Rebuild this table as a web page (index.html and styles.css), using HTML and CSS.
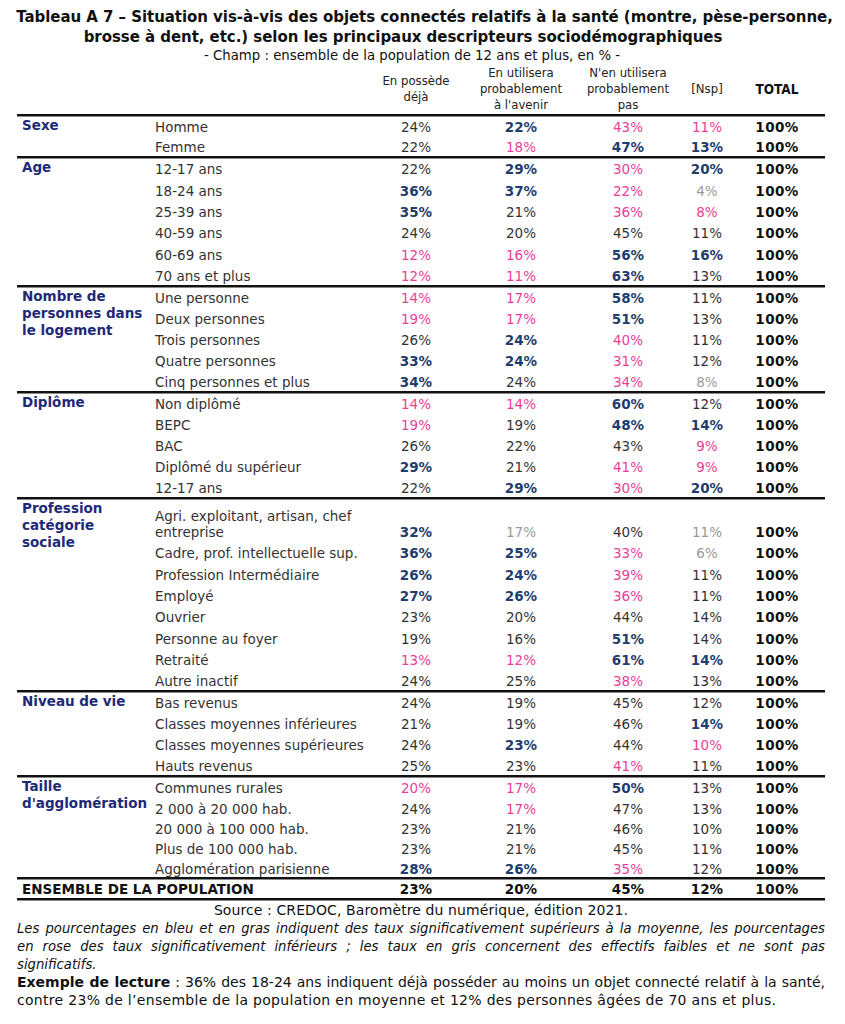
FILE: index.html
```html
<!DOCTYPE html>
<html lang="fr">
<head>
<meta charset="utf-8">
<link rel="stylesheet" href="styles.css">
</head>
<body>
<div class="page">
  <div class="title">
    <div class="t1">Tableau A 7 – Situation vis-à-vis des objets connectés relatifs à la santé (montre, pèse-personne,</div>
    <div class="t1 t1b">brosse à dent, etc.) selon les principaux descripteurs sociodémographiques</div>
    <div class="t2">- Champ : ensemble de la population de 12 ans et plus, en % -</div>
  </div>
  <table class="tbl">
    <colgroup>
      <col class="c-sec"><col class="c-sub"><col class="c-1"><col class="c-2"><col class="c-3"><col class="c-4"><col class="c-5"><col class="c-6">
    </colgroup>
    <thead>
      <tr class="head sep">
        <th></th><th></th>
        <th>En possède<br>déjà</th>
        <th>En utilisera<br>probablement<br>à l'avenir</th>
        <th>N'en utilisera<br>probablement<br>pas</th>
        <th>[Nsp]</th>
        <th class="tot">TOTAL</th>
        <th></th>
      </tr>
    </thead>
    <tbody class="tight">
      <tr><td class="sec" rowspan="2">Sexe</td><td class="sub">Homme</td><td>24%</td><td class="b">22%</td><td class="p">43%</td><td class="p">11%</td><td class="tot">100%</td><td></td></tr>
      <tr class="sep"><td class="sub">Femme</td><td>22%</td><td class="p">18%</td><td class="b">47%</td><td class="b">13%</td><td class="tot">100%</td><td></td></tr>
    </tbody>
    <tbody class="loose">
      <tr><td class="sec" rowspan="6">Age</td><td class="sub">12-17 ans</td><td>22%</td><td class="b">29%</td><td class="p">30%</td><td class="b">20%</td><td class="tot">100%</td><td></td></tr>
      <tr><td class="sub">18-24 ans</td><td class="b">36%</td><td class="b">37%</td><td class="p">22%</td><td class="g">4%</td><td class="tot">100%</td><td></td></tr>
      <tr><td class="sub">25-39 ans</td><td class="b">35%</td><td>21%</td><td class="p">36%</td><td class="p">8%</td><td class="tot">100%</td><td></td></tr>
      <tr><td class="sub">40-59 ans</td><td>24%</td><td>20%</td><td>45%</td><td>11%</td><td class="tot">100%</td><td></td></tr>
      <tr><td class="sub">60-69 ans</td><td class="p">12%</td><td class="p">16%</td><td class="b">56%</td><td class="b">16%</td><td class="tot">100%</td><td></td></tr>
      <tr class="sep"><td class="sub">70 ans et plus</td><td class="p">12%</td><td class="p">11%</td><td class="b">63%</td><td>13%</td><td class="tot">100%</td><td></td></tr>
    </tbody>
    <tbody>
      <tr><td class="sec" rowspan="5">Nombre de<br>personnes dans<br>le logement</td><td class="sub">Une personne</td><td class="p">14%</td><td class="p">17%</td><td class="b">58%</td><td>11%</td><td class="tot">100%</td><td></td></tr>
      <tr><td class="sub">Deux personnes</td><td class="p">19%</td><td class="p">17%</td><td class="b">51%</td><td>13%</td><td class="tot">100%</td><td></td></tr>
      <tr><td class="sub">Trois personnes</td><td>26%</td><td class="b">24%</td><td class="p">40%</td><td>11%</td><td class="tot">100%</td><td></td></tr>
      <tr><td class="sub">Quatre personnes</td><td class="b">33%</td><td class="b">24%</td><td class="p">31%</td><td>12%</td><td class="tot">100%</td><td></td></tr>
      <tr class="sep"><td class="sub">Cinq personnes et plus</td><td class="b">34%</td><td>24%</td><td class="p">34%</td><td class="g">8%</td><td class="tot">100%</td><td></td></tr>
    </tbody>
    <tbody>
      <tr><td class="sec" rowspan="5">Diplôme</td><td class="sub">Non diplômé</td><td class="p">14%</td><td class="p">14%</td><td class="b">60%</td><td>12%</td><td class="tot">100%</td><td></td></tr>
      <tr><td class="sub">BEPC</td><td class="p">19%</td><td>19%</td><td class="b">48%</td><td class="b">14%</td><td class="tot">100%</td><td></td></tr>
      <tr><td class="sub">BAC</td><td>26%</td><td>22%</td><td>43%</td><td class="p">9%</td><td class="tot">100%</td><td></td></tr>
      <tr><td class="sub">Diplômé du supérieur</td><td class="b">29%</td><td>21%</td><td class="p">41%</td><td class="p">9%</td><td class="tot">100%</td><td></td></tr>
      <tr class="sep"><td class="sub">12-17 ans</td><td>22%</td><td class="b">29%</td><td class="p">30%</td><td class="b">20%</td><td class="tot">100%</td><td></td></tr>
    </tbody>
    <tbody class="loose">
      <tr class="tall"><td class="sec" rowspan="8">Profession<br>catégorie<br>sociale</td><td class="sub">Agri. exploitant, artisan, chef<br>entreprise</td><td class="b">32%</td><td class="g">17%</td><td>40%</td><td class="g">11%</td><td class="tot">100%</td><td></td></tr>
      <tr><td class="sub">Cadre, prof. intellectuelle sup.</td><td class="b">36%</td><td class="b">25%</td><td class="p">33%</td><td class="g">6%</td><td class="tot">100%</td><td></td></tr>
      <tr><td class="sub">Profession Intermédiaire</td><td class="b">26%</td><td class="b">24%</td><td class="p">39%</td><td>11%</td><td class="tot">100%</td><td></td></tr>
      <tr><td class="sub">Employé</td><td class="b">27%</td><td class="b">26%</td><td class="p">36%</td><td>11%</td><td class="tot">100%</td><td></td></tr>
      <tr><td class="sub">Ouvrier</td><td>23%</td><td>20%</td><td>44%</td><td>14%</td><td class="tot">100%</td><td></td></tr>
      <tr><td class="sub">Personne au foyer</td><td>19%</td><td>16%</td><td class="b">51%</td><td>14%</td><td class="tot">100%</td><td></td></tr>
      <tr><td class="sub">Retraité</td><td class="p">13%</td><td class="p">12%</td><td class="b">61%</td><td class="b">14%</td><td class="tot">100%</td><td></td></tr>
      <tr class="sep"><td class="sub">Autre inactif</td><td>24%</td><td>25%</td><td class="p">38%</td><td>13%</td><td class="tot">100%</td><td></td></tr>
    </tbody>
    <tbody>
      <tr><td class="sec" rowspan="4">Niveau de vie</td><td class="sub">Bas revenus</td><td>24%</td><td>19%</td><td>45%</td><td>12%</td><td class="tot">100%</td><td></td></tr>
      <tr><td class="sub">Classes moyennes inférieures</td><td>21%</td><td>19%</td><td>46%</td><td class="b">14%</td><td class="tot">100%</td><td></td></tr>
      <tr><td class="sub">Classes moyennes supérieures</td><td>24%</td><td class="b">23%</td><td>44%</td><td class="p">10%</td><td class="tot">100%</td><td></td></tr>
      <tr class="sep"><td class="sub">Hauts revenus</td><td>25%</td><td>23%</td><td class="p">41%</td><td>11%</td><td class="tot">100%</td><td></td></tr>
    </tbody>
    <tbody class="tight">
      <tr><td class="sec" rowspan="5">Taille<br>d'agglomération</td><td class="sub">Communes rurales</td><td class="p">20%</td><td class="p">17%</td><td class="b">50%</td><td>13%</td><td class="tot">100%</td><td></td></tr>
      <tr><td class="sub">2 000 à 20 000 hab.</td><td>24%</td><td class="p">17%</td><td>47%</td><td>13%</td><td class="tot">100%</td><td></td></tr>
      <tr><td class="sub">20 000 à 100 000 hab.</td><td>23%</td><td>21%</td><td>46%</td><td>10%</td><td class="tot">100%</td><td></td></tr>
      <tr><td class="sub">Plus de 100 000 hab.</td><td>23%</td><td>21%</td><td>45%</td><td>11%</td><td class="tot">100%</td><td></td></tr>
      <tr class="sep last"><td class="sub">Agglomération parisienne</td><td class="b">28%</td><td class="b">26%</td><td class="p">35%</td><td>12%</td><td class="tot">100%</td><td></td></tr>
    </tbody>
    <tbody>
      <tr class="sep total-row"><td class="ens" colspan="2">ENSEMBLE DE LA POPULATION</td><td>23%</td><td>20%</td><td>45%</td><td>12%</td><td class="tot">100%</td><td></td></tr>
    </tbody>
  </table>
  <div class="notes">
    <p class="source">Source : CREDOC, Baromètre du numérique, édition 2021.</p>
    <div class="legend">
      <div class="ln full">Les pourcentages en bleu et en gras indiquent des taux significativement supérieurs à la moyenne, les pourcentages</div>
      <div class="ln full">en rose des taux significativement inférieurs ; les taux en gris concernent des effectifs faibles et ne sont pas</div>
      <div class="ln">significatifs.</div>
    </div>
    <div class="example">
      <div class="ln full"><strong class="ex-label">Exemple de lecture</strong> : 36% des 18-24 ans indiquent déjà posséder au moins un objet connecté relatif à la santé,</div>
      <div class="ln wide">contre 23% de l’ensemble de la population en moyenne et 12% des personnes âgées de 70 ans et plus.</div>
    </div>
  </div>
</div>
</body>
</html>
```
FILE: styles.css
```css
html, body {
  margin: 0;
  padding: 0;
  background: #ffffff;
}
body {
  font-family: "DejaVu Sans", Verdana, sans-serif;
  color: #333333;
}
.page {
  width: 808px;
  margin: 0 0 0 17px;
  padding-top: 7px;
}
.title {
  text-align: center;
  font-family: "DejaVu Sans", sans-serif;
  color: #111111;
  margin: 0 -11px 0 -4px;
}
.t1 {
  font-weight: bold;
  font-size: 15px;
  line-height: 20px;
  letter-spacing: -0.05px;
}
.t1b {
  padding-right: 43px;
}
.t2 {
  font-size: 13.3px;
  line-height: 18px;
  padding-right: 25px;
}
.tbl {
  width: 808px;
  border-collapse: separate;
  border-spacing: 0;
  table-layout: fixed;
  font-size: 13.5px;
}
.c-sec { width: 133px; }
.c-sub { width: 220px; }
.c-1 { width: 92px; }
.c-2 { width: 118px; }
.c-3 { width: 96px; }
.c-4 { width: 62px; }
.c-5 { width: 78px; }
.c-6 { width: 9px; }

.head th {
  font-family: "DejaVu Sans Condensed", "DejaVu Sans", sans-serif;
  font-weight: normal;
  font-size: 13px;
  line-height: 16px;
  color: #222222;
  text-align: center;
  vertical-align: middle;
  padding: 0 0 1px;
  height: 48px;
}
.head th.tot {
  font-weight: bold;
  color: #111111;
  font-size: 13.5px;
}
.tbl td {
  padding: 2px 0 3px;
  line-height: 16px;
  height: 16px;
  text-align: center;
  vertical-align: bottom;
  white-space: nowrap;
}
.tbl tbody.loose td {
  padding-bottom: 3.4px;
}
.tbl tbody.tight td {
  padding-bottom: 2.2px;
}
.tbl tr.sep > td,
.tbl tbody.loose tr.sep > td,
.tbl tbody.tight tr.sep > td {
  padding-bottom: 1px;
}
.tbl tbody.tight tr.last > td {
  padding-bottom: 0;
}
.tbl tr.total-row > td {
  padding-top: 1px;
}
.tbl td.sub {
  text-align: left;
  padding-left: 5px;
}
.tbl td.sec,
.tbl tbody.loose td.sec,
.tbl tbody.tight td.sec {
  text-align: left;
  vertical-align: top;
  padding: 0 0 0 5px;
  font-weight: bold;
  color: #1e2a78;
  line-height: 17px;
}
.tbl tr.sep > td,
.tbl tr.sep > th,
.tbl td.sec {
  border-bottom: 3px solid #111111;
  border-image: linear-gradient(to top, #8a8a8a 0, #8a8a8a 1px, #111111 1px, #111111 100%) 0 0 3 0 / 0 0 3px 0 stretch;
}
.tbl tbody.loose tr.tall > td {
  height: 32px;
  padding-top: 8px;
  padding-bottom: 3px;
}
.tbl tbody.loose tr.tall > td.sec {
  height: auto;
  padding-top: 0;
  padding-bottom: 0;
}
.tbl td.b {
  color: #1f3d6e;
  font-weight: bold;
}
.tbl td.p {
  color: #ec3d98;
}
.tbl td.g {
  color: #9a9a9a;
}
.tbl td.tot {
  color: #111111;
  font-weight: bold;
  letter-spacing: 0.4px;
}
.total-row td {
  font-weight: bold;
  color: #111111;
}
.tbl td.ens {
  text-align: left;
  padding-left: 5px;
  color: #111111;
}
.notes {
  font-family: "DejaVu Sans", sans-serif;
  font-size: 14px;
  line-height: 18px;
  color: #111111;
}
.notes p {
  margin: 0;
}
.source {
  text-align: center;
  letter-spacing: 0.1px;
}
.ln {
  white-space: nowrap;
  text-align: left;
}
.ln.full {
  text-align: justify;
  text-align-last: justify;
}
.ln.wide {
  letter-spacing: 0.3px;
}
.legend {
  font-family: "DejaVu Sans Condensed", "DejaVu Sans", sans-serif;
  font-style: italic;
  font-size: 14.7px;
}
.ex-label {
  font-weight: bold;
}
```
